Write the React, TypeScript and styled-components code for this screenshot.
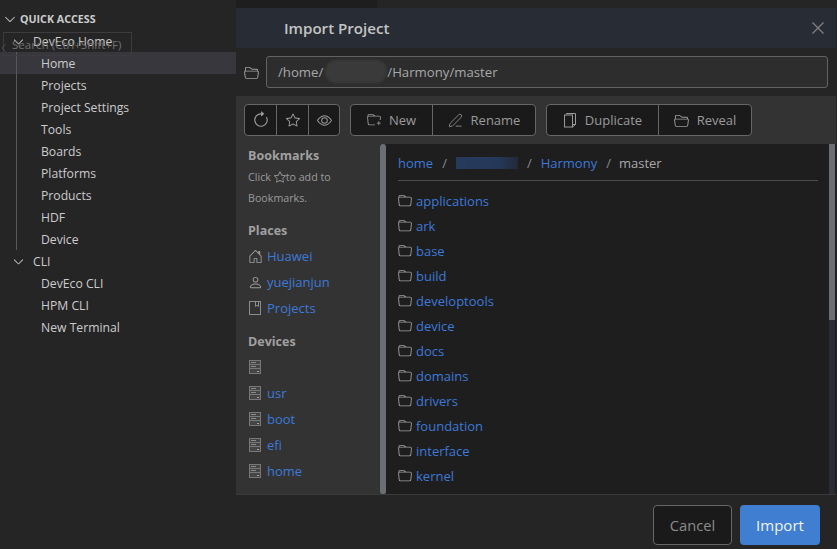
import React from "react";
import styled, { createGlobalStyle } from "styled-components";
import { VscChevronDown, VscChevronLeft, VscClose } from "react-icons/vsc";
import {
  BsArrowClockwise,
  BsStar,
  BsEye,
  BsFolderPlus,
  BsFolder2Open,
  BsFolder,
  BsHouseDoor,
  BsPerson,
} from "react-icons/bs";
import { PenLine } from "lucide-react";

const GlobalStyle = createGlobalStyle`
  html, body {
    margin: 0;
    padding: 0;
    height: 100%;
    overflow: hidden;
    background: #252526;
  }
  #root {
    height: 100%;
  }
  * {
    box-sizing: border-box;
  }
`;

const quickItems = [
  "Home",
  "Projects",
  "Project Settings",
  "Tools",
  "Boards",
  "Platforms",
  "Products",
  "HDF",
  "Device",
];
const cliItems = ["DevEco CLI", "HPM CLI", "New Terminal"];
const folders = [
  "applications",
  "ark",
  "base",
  "build",
  "developtools",
  "device",
  "docs",
  "domains",
  "drivers",
  "foundation",
  "interface",
  "kernel",
];
const devices = ["", "usr", "boot", "efi", "home"];

function DriveIcon() {
  return (
    <IconSlot>
      <svg width="12" height="14" viewBox="0 0 12 14">
        <rect x="0.5" y="0.5" width="11" height="13" fill="#454545" stroke="#787878" />
        <rect x="2" y="2" width="5" height="1" fill="#8a8a8a" />
        <rect x="1" y="4" width="10" height="1" fill="#787878" />
        <rect x="2" y="6" width="5" height="1" fill="#8a8a8a" />
        <rect x="1" y="8" width="10" height="1" fill="#787878" />
        <rect x="8" y="11" width="2" height="1" fill="#a5a5a5" />
      </svg>
    </IconSlot>
  );
}

function BookIcon() {
  return (
    <IconSlot>
      <svg width="12" height="14" viewBox="0 0 12 14" fill="none" stroke="#8c8c8c">
        <rect x="0.5" y="0.5" width="11" height="13" />
        <path d="M6.5 0.5V5.5L8 4.2L9.5 5.5V0.5" />
      </svg>
    </IconSlot>
  );
}

function DuplicateIcon() {
  return (
    <svg width="14" height="16" viewBox="0 0 14 16" fill="none" stroke="#9a9a9a">
      <path d="M3.5 2.5V1.5H12.5V12.5H10" />
      <rect x="1.5" y="3" width="8" height="12" />
      <path d="M9.5 15L12.5 12.5" />
    </svg>
  );
}

export default function App() {
  return (
    <>
      <GlobalStyle />
      <Page>
        <Sidebar>
          <SectionRow>
            <VscChevronDown size={16} />
            <SectionTitle>QUICK ACCESS</SectionTitle>
          </SectionRow>
          <GroupRow>
            <VscChevronDown size={15} />
            <span>DevEco Home</span>
          </GroupRow>
          <TreeGroup $guide>
            {quickItems.map((item) => (
              <TreeItem key={item} $active={item === "Home"}>
                {item}
              </TreeItem>
            ))}
          </TreeGroup>
          <GroupRow>
            <VscChevronDown size={15} />
            <span>CLI</span>
          </GroupRow>
          <TreeGroup>
            {cliItems.map((item) => (
              <TreeItem key={item}>{item}</TreeItem>
            ))}
          </TreeGroup>
          <GhostSearch>
            <GhostArrow>
              <VscChevronLeft size={12} />
            </GhostArrow>
            Search (Ctrl+Shift+F)
          </GhostSearch>
        </Sidebar>

        <Workspace>
          <TabStrip />
        </Workspace>

        <Modal>
          <ModalHeader>
            <ModalTitle>Import Project</ModalTitle>
            <CloseButton>
              <VscClose size={22} />
            </CloseButton>
          </ModalHeader>

          <PathRow>
            <BsFolder2Open size={15} />
            <PathBox>
              /home/
              <PathRedact />
              /Harmony/master
            </PathBox>
          </PathRow>

          <Toolbar>
            <ButtonGroup>
              <ToolButton $width={31}>
                <BsArrowClockwise size={18} />
              </ToolButton>
              <ToolButton $width={32}>
                <BsStar size={14} />
              </ToolButton>
              <ToolButton $width={31}>
                <BsEye size={15} />
              </ToolButton>
            </ButtonGroup>
            <ButtonGroup>
              <ToolButton $width={81}>
                <BsFolderPlus size={14} />
                New
              </ToolButton>
              <ToolButton $width={103}>
                <PenLine size={15} strokeWidth={1.3} />
                Rename
              </ToolButton>
            </ButtonGroup>
            <ButtonGroup>
              <ToolButton $width={111}>
                <DuplicateIcon />
                Duplicate
              </ToolButton>
              <ToolButton $width={93}>
                <BsFolder2Open size={15} />
                Reveal
              </ToolButton>
            </ButtonGroup>
          </Toolbar>

          <Body>
            <Places>
              <PlacesTitle $bottom={2}>Bookmarks</PlacesTitle>
              <Hint>
                Click <BsStar size={12} />
                to add to
              </Hint>
              <Hint>Bookmarks.</Hint>
              <PlacesTitle $top={14} $bottom={4}>
                Places
              </PlacesTitle>
              <PlaceRow $gap={4}>
                <BsHouseDoor size={15} />
                <Link>Huawei</Link>
              </PlaceRow>
              <PlaceRow $gap={4}>
                <BsPerson size={15} />
                <Link>yuejianjun</Link>
              </PlaceRow>
              <PlaceRow>
                <BookIcon />
                <Link>Projects</Link>
              </PlaceRow>
              <PlacesTitle $top={12} $bottom={4}>
                Devices
              </PlacesTitle>
              {devices.map((name) => (
                <PlaceRow key={name || "root"}>
                  <DriveIcon />
                  <Link>{name}</Link>
                </PlaceRow>
              ))}
            </Places>
            <PaneScrollbar />
            <Files>
              <Breadcrumb>
                <Link>home</Link>
                <Slash>/</Slash>
                <CrumbRedact />
                <Slash>/</Slash>
                <Link>Harmony</Link>
                <Slash>/</Slash>
                <Current>master</Current>
              </Breadcrumb>
              <FileList>
                {folders.map((name) => (
                  <FileRow key={name}>
                    <BsFolder size={14} />
                    <Link>{name}</Link>
                  </FileRow>
                ))}
              </FileList>
              <FileScrollTrack>
                <FileScrollThumb />
              </FileScrollTrack>
            </Files>
          </Body>

          <Footer>
            <CancelButton>Cancel</CancelButton>
            <ImportButton>Import</ImportButton>
          </Footer>
        </Modal>
      </Page>
    </>
  );
}

const uiFont = `"Open Sans", "Noto Sans", sans-serif`;

const Page = styled.div`
  position: relative;
  display: flex;
  width: 837px;
  height: 549px;
  overflow: hidden;
  background: #252526;
  font-family: ${uiFont};
`;

const Sidebar = styled.div`
  position: relative;
  flex: 0 0 236px;
  padding-top: 8px;
  color: #cccccc;
  font-size: 12.2px;
`;

const SectionRow = styled.div`
  display: flex;
  align-items: center;
  gap: 2px;
  height: 22px;
  padding-left: 2px;
  color: #cccccc;
`;

const SectionTitle = styled.span`
  font-size: 10.7px;
  font-weight: 700;
`;

const GroupRow = styled.div`
  display: flex;
  align-items: center;
  gap: 7px;
  height: 22px;
  padding-left: 11px;
`;

const TreeGroup = styled.div<{ $guide?: boolean }>`
  position: relative;
  &::before {
    content: "";
    display: ${(p) => (p.$guide ? "block" : "none")};
    position: absolute;
    left: 16px;
    top: 0;
    bottom: 0;
    width: 1px;
    background: #585858;
  }
`;

const TreeItem = styled.div<{ $active?: boolean }>`
  display: flex;
  align-items: center;
  height: 22px;
  padding-left: 41px;
  background: ${(p) => (p.$active ? "#37373d" : "transparent")};
`;

const GhostSearch = styled.div`
  position: absolute;
  left: 3px;
  top: 32px;
  width: 129px;
  height: 24px;
  padding-left: 8px;
  border: 1px solid #3c3c3c;
  color: #707070;
  font-size: 11.6px;
  line-height: 24px;
  white-space: nowrap;
`;

const GhostArrow = styled.span`
  position: absolute;
  left: -6px;
  top: 5px;
  color: #555555;
`;

const Workspace = styled.div`
  flex: 1;
`;

const TabStrip = styled.div`
  width: 141px;
  height: 8px;
  background: #1e1e1e;
`;

const Modal = styled.div`
  position: absolute;
  left: 236px;
  top: 8px;
  width: 600px;
  height: 541px;
  display: flex;
  flex-direction: column;
  background: #252525;
`;

const ModalHeader = styled.div`
  display: flex;
  align-items: center;
  justify-content: space-between;
  flex: 0 0 40px;
  padding: 0 7px 0 48px;
  background: #282c34;
`;

const ModalTitle = styled.div`
  color: #c4c4c4;
  font-size: 15.1px;
  font-weight: 600;
`;

const CloseButton = styled.div`
  display: flex;
  color: #7d7d7d;
`;

const PathRow = styled.div`
  display: flex;
  align-items: center;
  gap: 7px;
  flex: 0 0 48px;
  padding: 0 8px;
  color: #a0a0a0;
`;

const PathBox = styled.div`
  display: flex;
  flex: 1;
  height: 32px;
  padding-left: 11px;
  border: 1px solid #626262;
  border-radius: 3px;
  background: #2d2d2d;
  color: #a8a8a8;
  font-size: 13.2px;
  line-height: 31px;
  white-space: nowrap;
`;

const PathRedact = styled.span`
  width: 62px;
  height: 23px;
  margin: 3px 0 0 2px;
  border-radius: 12px;
  background: #3a3a3a;
  filter: blur(1px);
`;

const Toolbar = styled.div`
  display: flex;
  align-items: center;
  gap: 10px;
  flex: 0 0 48px;
  padding: 0 8px;
  background: #333333;
`;

const ButtonGroup = styled.div`
  display: flex;
  height: 32px;
  border: 1px solid #666666;
  border-radius: 4px;
  background: #1a1a1a;
  overflow: hidden;
`;

const ToolButton = styled.div<{ $width: number }>`
  display: flex;
  align-items: center;
  justify-content: center;
  gap: 8px;
  width: ${(p) => p.$width}px;
  color: #9a9a9a;
  font-size: 13px;
  & + & {
    border-left: 1px solid #666666;
  }
`;

const Body = styled.div`
  display: flex;
  flex: 0 0 350px;
  overflow: hidden;
`;

const Places = styled.div`
  flex: 0 0 144px;
  padding: 3px 0 0 12px;
  background: #333333;
`;

const PlacesTitle = styled.div<{ $top?: number; $bottom?: number }>`
  margin-top: ${(p) => p.$top ?? 0}px;
  margin-bottom: ${(p) => p.$bottom ?? 0}px;
  height: 17px;
  color: #a0a0a0;
  font-size: 12.5px;
  font-weight: 700;
  line-height: 17px;
`;

const Hint = styled.div`
  display: flex;
  align-items: center;
  height: 21px;
  color: #9a9a9a;
  font-size: 10.7px;
  white-space: pre;
`;

const Link = styled.span`
  color: #3d79d8;
  font-size: 13px;
`;

const PlaceRow = styled.div<{ $gap?: number }>`
  display: flex;
  align-items: center;
  gap: ${(p) => p.$gap ?? 5}px;
  height: 26px;
  color: #9a9a9a;
`;

const IconSlot = styled.span`
  display: flex;
  margin: 0 1px;
`;

const PaneScrollbar = styled.div`
  flex: 0 0 6px;
  border-radius: 3px 3px 2px 2px;
  background: #6b6e73;
`;

const Files = styled.div`
  position: relative;
  flex: 1;
  padding: 0 12px;
  background: #1e1e1e;
`;

const Breadcrumb = styled.div`
  display: flex;
  align-items: center;
  gap: 9px;
  width: 420px;
  height: 37px;
  padding-top: 2px;
  border-bottom: 1px solid #4a4a4a;
`;

const Slash = styled.span`
  color: #8a8a8a;
  font-size: 13px;
`;

const Current = styled.span`
  margin-left: -1px;
  color: #a8a8a8;
  font-size: 13px;
`;

const CrumbRedact = styled.span`
  width: 62px;
  height: 12px;
  background: linear-gradient(90deg, #263a5c 0%, #25385a 70%, #222a36 100%);
`;

const FileList = styled.div`
  padding-top: 7px;
`;

const FileRow = styled.div`
  display: flex;
  align-items: center;
  gap: 4px;
  height: 25px;
  color: #a0a0a0;
`;

const FileScrollTrack = styled.div`
  position: absolute;
  right: 1px;
  top: 0;
  bottom: 0;
  width: 6px;
  background: #2a2d33;
`;

const FileScrollThumb = styled.div`
  height: 176px;
  background: #6b6e73;
`;

const Footer = styled.div`
  display: flex;
  justify-content: flex-end;
  align-items: flex-start;
  gap: 8px;
  flex: 1;
  padding: 10px 16px 0 0;
  border-top: 1px solid #3a3a3a;
`;

const CancelButton = styled.div`
  width: 79px;
  height: 40px;
  border: 1px solid #666666;
  border-radius: 4px;
  background: #1a1a1a;
  color: #8a8a8a;
  font-size: 14.7px;
  line-height: 38px;
  text-align: center;
`;

const ImportButton = styled.div`
  width: 80px;
  height: 40px;
  border-radius: 4px;
  background: #3f7ed0;
  color: #f2f2f2;
  font-size: 15px;
  line-height: 40px;
  text-align: center;
`;
